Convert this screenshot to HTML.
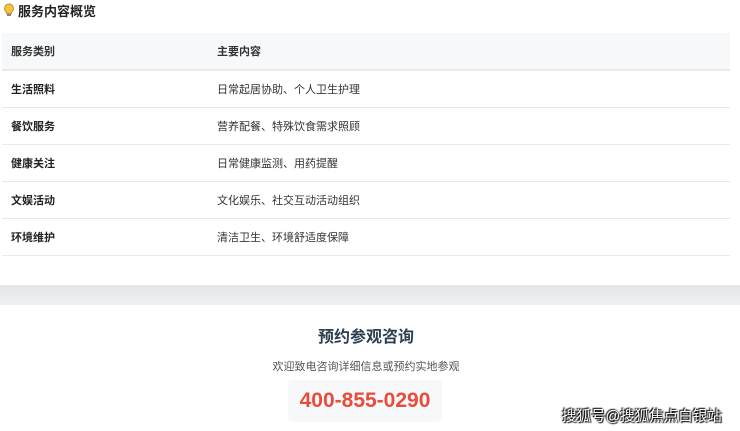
<!DOCTYPE html>
<html><head><meta charset="utf-8"><style>
*{margin:0;padding:0;box-sizing:border-box}
body{width:740px;height:431px;overflow:hidden;background:#fff;font-family:"Liberation Sans","Noto Sans CJK SC",sans-serif;color:#333;position:relative}
.t{position:absolute;left:3px;top:0px;font-size:13px;font-weight:bold;color:#222;display:flex;align-items:center;height:20px}
.t svg{margin-right:3px}
table{position:absolute;left:2px;top:33px;width:728px;border-collapse:collapse;font-size:11px;table-layout:fixed}
td,th{height:37px;border-bottom:1px solid #e8e9eb;text-align:left;padding-left:9px;vertical-align:middle}
th{background:#f7f8fa;font-weight:bold;color:#333;border-bottom:2px solid #e8e9eb}
td:first-child{font-weight:bold;color:#222}
td:last-child,th:last-child{padding-left:0}
.band{position:absolute;left:0;top:285px;width:740px;height:20px;background:linear-gradient(#e3e5e8,#eef0f2)}
.h{position:absolute;left:0;width:732px;text-align:center}
.h1{top:323px;font-size:16px;font-weight:bold;color:#2c3e50}
.h2{top:358px;font-size:11px;color:#555}
.ph{position:absolute;left:288px;top:380px;width:154px;height:42px;background:#f7f8fa;border-radius:4px;color:#e74c3c;font-size:21px;font-weight:bold;text-align:center;line-height:42px}
.wm{position:absolute;left:562px;top:405px;font-size:14.5px;color:#fff;text-shadow:0 0 2px #000,1px 1px 1px #000,-1px -1px 1px #000}
</style></head><body>
<div class="t"><svg width="12" height="14" viewBox="0 0 12 14"><path d="M6 1a4.5 4.5 0 0 0-2.5 8.2V10.5h5V9.2A4.5 4.5 0 0 0 6 1z" fill="#f5c242" stroke="#c8962a" stroke-width="1"/><rect x="4" y="11" width="4" height="2" fill="#888"/></svg>服务内容概览</div>
<table>
<colgroup><col style="width:215px"><col></colgroup>
<tr><th>服务类别</th><th>主要内容</th></tr>
<tr><td>生活照料</td><td>日常起居协助、个人卫生护理</td></tr>
<tr><td>餐饮服务</td><td>营养配餐、特殊饮食需求照顾</td></tr>
<tr><td>健康关注</td><td>日常健康监测、用药提醒</td></tr>
<tr><td>文娱活动</td><td>文化娱乐、社交互动活动组织</td></tr>
<tr><td>环境维护</td><td>清洁卫生、环境舒适度保障</td></tr>
</table>
<div class="band"></div>
<div class="h h1">预约参观咨询</div>
<div class="h h2">欢迎致电咨询详细信息或预约实地参观</div>
<div class="ph">400-855-0290</div>
<div class="wm">搜狐号@搜狐焦点白银站</div>
</body></html>
